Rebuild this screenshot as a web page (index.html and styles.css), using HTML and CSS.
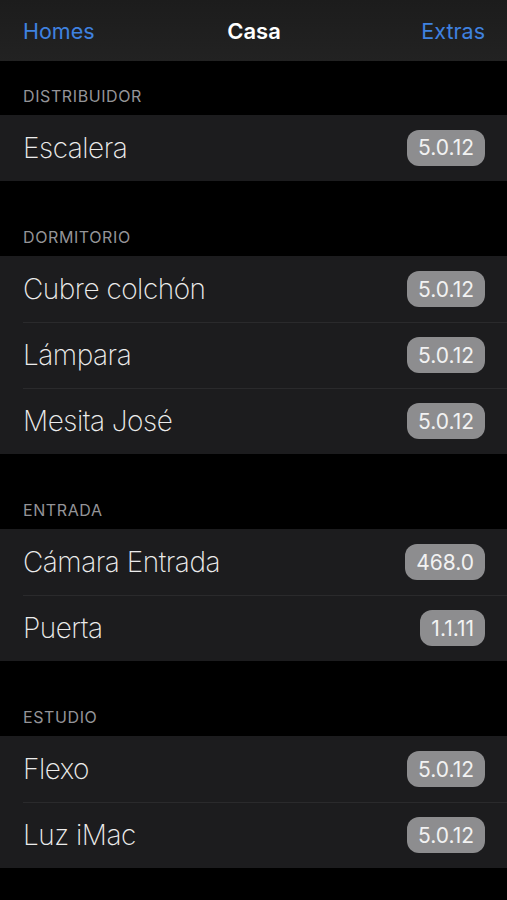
FILE: index.html
```html
<!DOCTYPE html>
<html lang="es">
<head>
    <meta charset="UTF-8">
    <meta name="viewport" content="width=device-width, initial-scale=1.0">
    <title>Casa</title>
    <link rel="stylesheet" href="styles.css">
</head>
<body>
    <header class="nav-bar">
        <a class="nav-link" href="#">Homes</a>
        <h1 class="nav-title">Casa</h1>
        <a class="nav-link nav-right" href="#">Extras</a>
    </header>

    <main class="device-list">
        <section class="room room-first">
            <h2 class="room-name">DISTRIBUIDOR</h2>
            <ul class="room-items">
                <li class="item"><span class="item-name">Escalera</span><span class="version">5.0.12</span></li>
            </ul>
        </section>

        <section class="room">
            <h2 class="room-name">DORMITORIO</h2>
            <ul class="room-items">
                <li class="item"><span class="item-name">Cubre colchón</span><span class="version">5.0.12</span></li>
                <li class="item"><span class="item-name">Lámpara</span><span class="version">5.0.12</span></li>
                <li class="item"><span class="item-name">Mesita José</span><span class="version">5.0.12</span></li>
            </ul>
        </section>

        <section class="room">
            <h2 class="room-name">ENTRADA</h2>
            <ul class="room-items">
                <li class="item"><span class="item-name">Cámara Entrada</span><span class="version">468.0</span></li>
                <li class="item"><span class="item-name">Puerta</span><span class="version">1.1.11</span></li>
            </ul>
        </section>

        <section class="room">
            <h2 class="room-name">ESTUDIO</h2>
            <ul class="room-items">
                <li class="item"><span class="item-name">Flexo</span><span class="version">5.0.12</span></li>
                <li class="item"><span class="item-name">Luz iMac</span><span class="version">5.0.12</span></li>
            </ul>
        </section>
    </main>
</body>
</html>
```

FILE: styles.css
```css
/* Base */
body {
    margin: 0;
    background: #000;
    font-family: Inter, "Liberation Sans", sans-serif;
    color: #e6e6e6;
}

/* Navigation bar */
.nav-bar {
    height: 61px;
    padding: 0 22px 0 23px;
    display: flex;
    align-items: center;
    justify-content: space-between;
    background: linear-gradient(180deg, #1c1c1c, #222222);
}

.nav-link {
    flex: 1;
    font-size: 21.5px;
    color: #3f82e0;
    text-decoration: none;
}

.nav-right {
    text-align: right;
}

.nav-title {
    margin: 0;
    font-size: 22px;
    font-weight: 600;
    color: #fff;
}

/* Sections */
.room {
    padding-top: 46.5px;
}

.room-first {
    padding-top: 25px;
}

.room-name {
    margin: 0;
    padding: 0 23px 9px;
    font-size: 16px;
    line-height: 20px;
    font-weight: 400;
    letter-spacing: 0.6px;
    color: #949498;
}

.room-items {
    margin: 0;
    padding: 0 0 0 23px;
    list-style: none;
    background: #1c1c1e;
}

.item {
    height: 65.8px;
    padding-right: 22px;
    display: flex;
    align-items: center;
    justify-content: space-between;
    box-sizing: border-box;
    border-top: 1px solid #2a2a2c;
}

.item:first-child {
    border-top: none;
}

.item-name {
    font-size: 28px;
    font-weight: 200;
    letter-spacing: -0.5px;
    color: #ececec;
}

.version {
    flex: none;
    height: 36px;
    padding: 0 11px;
    box-sizing: border-box;
    display: flex;
    align-items: center;
    border-radius: 12px;
    background: #8d8d8f;
    font-size: 21px;
    color: #f2f2f2;
}
```
